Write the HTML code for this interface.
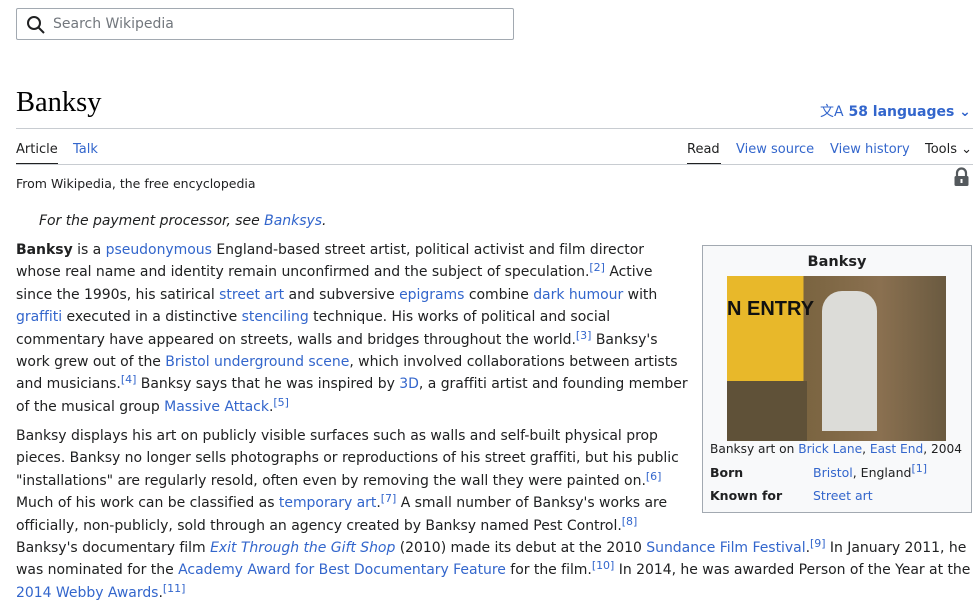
<!DOCTYPE html>
<html><head><meta charset="utf-8"><style>
body{margin:0;background:#fff;font-family:"DejaVu Sans","Liberation Sans",sans-serif;color:#202122;width:973px;height:604px;overflow:hidden;position:relative}
a{color:#3366cc;text-decoration:none}
.abs{position:absolute}
.search{left:16px;top:8px;width:498px;height:32px;border:1px solid #a2a9b1;border-radius:2px;box-sizing:border-box}
.search span{position:absolute;left:36px;top:7px;font-size:14px;color:#72777d}
h1{position:absolute;left:16px;top:87px;margin:0;font-family:"Liberation Serif",serif;font-weight:normal;font-size:28.5px;color:#000}
.p{font-size:14px;line-height:22.4px;white-space:nowrap;letter-spacing:-0.03px}
sup{font-size:11px;line-height:0;vertical-align:5px}
.tab{font-size:13px}
.ib{left:702px;top:245px;width:270px;height:268px;border:1px solid #a2a9b1;background:#f8f9fa;box-sizing:border-box;font-size:12.5px}
</style></head><body>
<div class="abs search"><svg class="abs" style="left:9px;top:6px" width="20" height="20" viewBox="0 0 20 20"><circle cx="8" cy="8" r="6" fill="none" stroke="#202122" stroke-width="2"/><path d="M12.5 12.5L18 18" stroke="#202122" stroke-width="2"/></svg><span>Search Wikipedia</span></div>
<h1>Banksy</h1>
<div class="abs" style="left:820px;top:101px;font-size:14px;font-weight:bold;color:#3366cc"><span style="font-weight:normal">文A</span> 58 languages ⌄</div>
<div class="abs" style="left:16px;top:128px;width:957px;height:1px;background:#c8ccd1"></div>
<div class="abs tab" style="left:16px;top:142px">Article</div>
<div class="abs tab" style="left:73px;top:142px;color:#3366cc">Talk</div>
<div class="abs" style="left:16px;top:163px;width:42px;height:2px;background:#202122"></div>
<div class="abs" style="left:687px;top:163px;width:34px;height:2px;background:#202122"></div>
<div class="abs tab" style="left:687px;top:142px">Read</div>
<div class="abs tab" style="left:736px;top:142px;color:#3366cc">View source</div>
<div class="abs tab" style="left:830px;top:142px;color:#3366cc">View history</div>
<div class="abs tab" style="left:925px;top:142px">Tools ⌄</div>
<div class="abs" style="left:16px;top:164px;width:957px;height:1px;background:#c8ccd1"></div>
<div class="abs" style="left:16px;top:176px;font-size:12.5px">From Wikipedia, the free encyclopedia</div>
<svg class="abs" style="left:953px;top:167px" width="17" height="20" viewBox="0 0 17 20"><path d="M4 9V6a4.5 4.5 0 0 1 9 0v3" fill="none" stroke="#54595d" stroke-width="2.2"/><rect x="1.5" y="9" width="14" height="10" rx="1.5" fill="#54595d"/><rect x="7.5" y="12" width="2" height="4" fill="#fff"/></svg>
<div class="abs p" style="left:39px;top:210px;font-style:italic">For the payment processor, see <a href="#">Banksys</a>.</div>
<div class="abs p" style="left:16px;top:239px"><b>Banksy</b> is a <a href="#">pseudonymous</a> England-based street artist, political activist and film director<br>whose real name and identity remain unconfirmed and the subject of speculation.<sup><a>[2]</a></sup> Active<br>since the 1990s, his satirical <a>street art</a> and subversive <a>epigrams</a> combine <a>dark humour</a> with<br><a>graffiti</a> executed in a distinctive <a>stenciling</a> technique. His works of political and social<br>commentary have appeared on streets, walls and bridges throughout the world.<sup><a>[3]</a></sup> Banksy's<br>work grew out of the <a>Bristol underground scene</a>, which involved collaborations between artists<br>and musicians.<sup><a>[4]</a></sup> Banksy says that he was inspired by <a>3D</a>, a graffiti artist and founding member<br>of the musical group <a>Massive Attack</a>.<sup><a>[5]</a></sup></div>
<div class="abs p" style="left:16px;top:425px">Banksy displays his art on publicly visible surfaces such as walls and self-built physical prop<br>pieces. Banksy no longer sells photographs or reproductions of his street graffiti, but his public<br>"installations" are regularly resold, often even by removing the wall they were painted on.<sup><a>[6]</a></sup><br>Much of his work can be classified as <a>temporary art</a>.<sup><a>[7]</a></sup> A small number of Banksy's works are<br>officially, non-publicly, sold through an agency created by Banksy named Pest Control.<sup><a>[8]</a></sup><br>Banksy's documentary film <a><i>Exit Through the Gift Shop</i></a> (2010) made its debut at the 2010 <a>Sundance Film Festival</a>.<sup><a>[9]</a></sup> In January 2011, he<br>was nominated for the <a>Academy Award for Best Documentary Feature</a> for the film.<sup><a>[10]</a></sup> In 2014, he was awarded Person of the Year at the<br><a>2014 Webby Awards</a>.<sup><a>[11]</a></sup></div>
<div class="abs ib">
<div class="abs" style="left:0;width:268px;top:8px;text-align:center;font-weight:bold;font-size:14.5px">Banksy</div>
<div class="abs" style="left:24px;top:30px;width:219px;height:165px;background:linear-gradient(90deg,#e8b82a 0,#e8b82a 35%,#7a6440 35%,#8a7050 70%,#6a5a40 100%);overflow:hidden">
<div class="abs" style="left:0;top:105px;width:80px;height:60px;background:#5f5138"></div>
<div class="abs" style="left:95px;top:15px;width:55px;height:140px;background:#dcdcd8;border-radius:20px 20px 0 0"></div>
<div class="abs" style="left:0;top:22px;font:bold 20px 'Liberation Sans';color:#111">N ENTRY</div>
</div>
<div class="abs" style="left:7px;top:196px;font-size:12.2px;white-space:nowrap">Banksy art on <a>Brick Lane</a>, <a>East End</a>, 2004</div>
<div class="abs" style="left:7px;top:219px;font-weight:bold">Born</div>
<div class="abs" style="left:110px;top:219px"><a>Bristol</a>, England<sup><a>[1]</a></sup></div>
<div class="abs" style="left:7px;top:242px;font-weight:bold">Known for</div>
<div class="abs" style="left:110px;top:242px"><a>Street art</a></div>
</div>
</body></html>
